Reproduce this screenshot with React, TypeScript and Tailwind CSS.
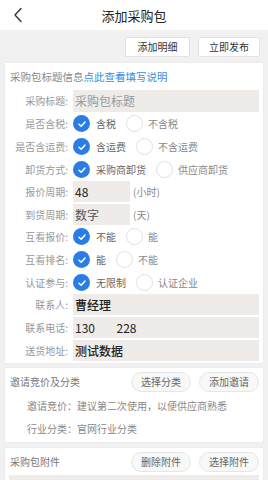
import React from "react";

const font = { fontFamily: '"Noto Sans CJK SC", "Noto Sans", sans-serif' };

function Check({ on }: { on: boolean }) {
  if (on)
    return (
      <span className="w-[17px] h-[17px] rounded-full bg-[#2b7de6] flex items-center justify-center shrink-0">
        <svg width="10" height="10" viewBox="0 0 10 10" fill="none">
          <path d="M2 5.2 L4.2 7.2 L8 3" stroke="#fff" strokeWidth="1.5" strokeLinecap="round" strokeLinejoin="round" />
        </svg>
      </span>
    );
  return <span className="block w-[17px] h-[17px] rounded-full border border-[#e0e0e0] bg-white shrink-0" />;
}

function Label({ children }: { children: React.ReactNode }) {
  return <div className="w-[63px] shrink-0 text-right text-[10px] text-[#999] leading-none">{children}</div>;
}

function RadioRow({ label, a, b }: { label: string; a: string; b: string }) {
  return (
    <div className="h-[23px] flex items-center gap-[5px]">
      <Label>{label}</Label>
      <div className="flex items-center">
        <Check on />
        <span className="ml-[6px] text-[10px] text-[#666] leading-none">{a}</span>
        <span className="ml-[10px] flex"><Check on={false} /></span>
        <span className="ml-[5px] text-[10px] text-[#888] leading-none">{b}</span>
      </div>
    </div>
  );
}

function InputRow({ label, value, dark, bold }: { label: string; value: string; dark?: boolean; bold?: boolean }) {
  return (
    <div className="h-[21px] flex items-center gap-[5px]">
      <Label>{label}</Label>
      <div className={`flex-1 h-full bg-[#eeebe8] flex items-center pl-[2px] text-[12px] leading-none whitespace-pre ${dark ? "text-[#222]" : "text-[#999]"} ${bold ? "font-medium" : ""}`}>
        {value}
      </div>
    </div>
  );
}

function ShortInput({ label, value, unit, dark }: { label: string; value: string; unit: string; dark?: boolean }) {
  return (
    <div className="h-[21px] flex items-center gap-[5px]">
      <Label>{label}</Label>
      <div className={`w-[57px] h-full bg-[#eeebe8] flex items-center pl-[2px] text-[12px] leading-none ${dark ? "text-[#222]" : "text-[#555]"}`}>
        {value}
      </div>
      <span className="text-[10px] text-[#888] leading-none ml-[-2px]">{unit}</span>
    </div>
  );
}

function Pill({ children }: { children: React.ReactNode }) {
  return (
    <div className="w-[60px] h-[20px] rounded-full border border-[#e6e6e6] bg-[#f8f8f8] flex items-center justify-center text-[10px] text-[#666] leading-none">
      {children}
    </div>
  );
}

export default function App() {
  return (
    <div style={font} className="w-[268px] h-[480px] overflow-hidden bg-[#f1f1f1]">
      <div className="h-[30px] bg-white grid grid-cols-[30px_1fr_30px] items-center">
        <div className="flex items-center justify-center pl-[5px]">
          <svg width="10" height="16" viewBox="0 0 10 16" fill="none">
            <path d="M8 1.5 L2 8 L8 14.5" stroke="#333" strokeWidth="1.4" strokeLinecap="round" strokeLinejoin="round" />
          </svg>
        </div>
        <div className="text-center text-[13px] text-[#222] leading-none">添加采购包</div>
        <div />
      </div>

      <div className="flex justify-end gap-[8px] pr-[8px] pt-[7px] pb-[6px]">
        <div className="w-[65px] h-[20px] bg-white border border-[#e2e2e2] rounded-[2px] flex items-center justify-center text-[10px] text-[#333] leading-none">添加明细</div>
        <div className="w-[62px] h-[20px] bg-white border border-[#e2e2e2] rounded-[2px] flex items-center justify-center text-[10px] text-[#333] leading-none">立即发布</div>
      </div>

      <div className="mx-[5px] bg-white pt-[8px] pb-[2px] pr-[4px] shadow-[0_0_2px_rgba(0,0,0,0.06)]">
        <div className="pl-[5px] text-[10.5px] leading-[12px] text-[#8a8a8a]">
          采购包标题信息<span className="text-[#3a8de0]">点此查看填写说明</span>
        </div>
        <div className="mt-[7px] h-[22px] flex items-center gap-[5px]">
          <Label>采购标题:</Label>
          <div className="flex-1 h-full bg-[#eeebe8] flex items-center pl-[2px] text-[12px] text-[#999] leading-none">采购包标题</div>
        </div>
        <RadioRow label="是否含税:" a="含税" b="不含税" />
        <RadioRow label="是否含运费:" a="含运费" b="不含运费" />
        <RadioRow label="卸货方式:" a="采购商卸货" b="供应商卸货" />
        <ShortInput label="报价周期:" value="48" unit="(小时)" dark />
        <div className="h-[2px]" />
        <ShortInput label="到货周期:" value="数字" unit="(天)" />
        <RadioRow label="互看报价:" a="不能" b="能" />
        <RadioRow label="互看排名:" a="能" b="不能" />
        <RadioRow label="认证参与:" a="无限制" b="认证企业" />
        <div className="flex flex-col gap-[2px]">
          <InputRow label="联系人:" value="曹经理" dark bold />
          <InputRow label="联系电话:" value="130        228" dark />
          <InputRow label="送货地址:" value="测试数据" dark bold />
        </div>
      </div>

      <div className="mx-[5px] mt-[5px] bg-white pt-[4px] pb-[7px] pr-[4px] shadow-[0_0_2px_rgba(0,0,0,0.06)]">
        <div className="flex items-center">
          <div className="flex-1 pl-[5px] text-[10px] text-[#777] leading-none">邀请竞价及分类</div>
          <div className="flex gap-[8px]">
            <Pill>选择分类</Pill>
            <Pill>添加邀请</Pill>
          </div>
        </div>
        <div className="pl-[22px] mt-[7px] text-[10px] text-[#888] leading-[13px]">邀请竞价：建议第二次使用，以便供应商熟悉</div>
        <div className="pl-[22px] mt-[10px] text-[10px] text-[#888] leading-[13px]">行业分类：官网行业分类</div>
      </div>

      <div className="mx-[5px] mt-[6px] bg-white pt-[4px] pr-[4px] pb-[10px] shadow-[0_0_2px_rgba(0,0,0,0.06)]">
        <div className="flex items-center">
          <div className="flex-1 pl-[5px] text-[10px] text-[#777] leading-none">采购包附件</div>
          <div className="flex gap-[8px]">
            <Pill>删除附件</Pill>
            <Pill>选择附件</Pill>
          </div>
        </div>
        <div className="mt-[3px] ml-[4px] h-[24px] bg-[#eeebe8] flex items-center pl-[4px] text-[11px] text-[#999] leading-none">附件说明</div>
      </div>
    </div>
  );
}
